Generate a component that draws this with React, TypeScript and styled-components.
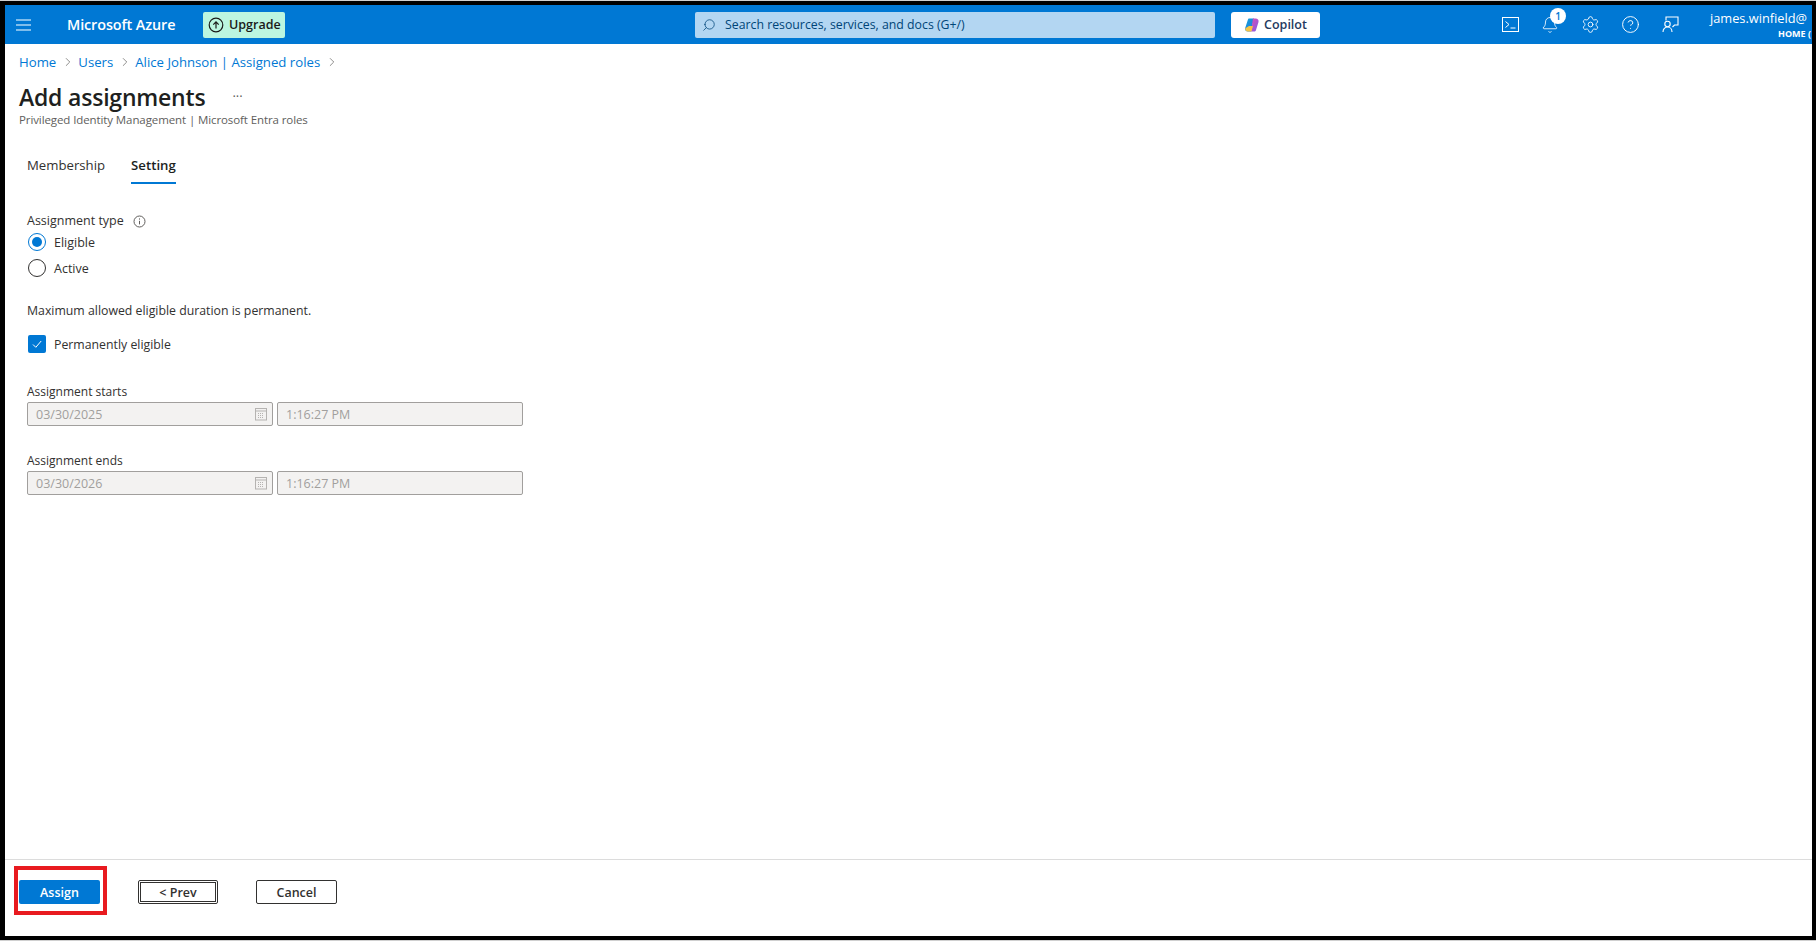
import styled, { createGlobalStyle } from "styled-components";
import { Bell, ChevronRight, CircleHelp, Search, Settings } from "lucide-react";

const GlobalStyle = createGlobalStyle`
  html, body { margin: 0; padding: 0; background: #fff; overflow: hidden; }
  * { box-sizing: border-box; }
`;

const font = `"Open Sans", "Noto Sans", "Liberation Sans", sans-serif`;

const Frame = styled.div`
  width: 1816px;
  height: 941px;
  padding: 1px 0 1px 0;
  background: #d0d0d0;
  font-family: ${font};
  color: #323130;
`;

const Page = styled.div`
  height: 939px;
  border: solid #000;
  border-width: 4px 4px 4px 5px;
  background: #fff;
  display: flex;
  flex-direction: column;
  overflow: hidden;
`;

const TopBar = styled.header`
  height: 39px;
  flex: none;
  background: #0078d4;
  display: flex;
  align-items: center;
  color: #fff;
`;

const Burger = styled.div`
  width: 62px;
  padding-left: 11px;
  display: flex;
`;

const Brand = styled.div`
  width: 136px;
  font-size: 14.4px;
  font-weight: 600;
  letter-spacing: -0.1px;
  white-space: nowrap;
`;

const Upgrade = styled.div`
  width: 82px;
  height: 26px;
  background: #bcf6e0;
  border-radius: 2px;
  display: flex;
  align-items: center;
  gap: 5px;
  padding-left: 5px;
  font-size: 12.5px;
  font-weight: 600;
  color: #1b1a19;
`;

const SearchBox = styled.div`
  width: 520px;
  height: 26px;
  margin-left: 410px;
  background: #b3d6f2;
  border-radius: 2px;
  display: flex;
  align-items: center;
  gap: 9px;
  padding-left: 7px;
  font-size: 12.3px;
  color: #004578;
`;

const Copilot = styled.div`
  width: 89px;
  height: 26px;
  margin-left: 16px;
  background: #fff;
  border-radius: 3px;
  display: flex;
  align-items: center;
  justify-content: center;
  gap: 4px;
  font-size: 12.5px;
  font-weight: 600;
  color: #243a5e;
`;

const IconRow = styled.div`
  display: flex;
  align-items: center;
  margin-left: 180px;
  gap: 20px;
`;

const TopIcon = styled.div`
  position: relative;
  width: 20px;
  height: 20px;
  display: flex;
  align-items: center;
  justify-content: center;
  color: #fff;
`;

const Badge = styled.span`
  position: absolute;
  top: -7px;
  left: 10px;
  width: 16px;
  height: 16px;
  border-radius: 50%;
  background: #fff;
  color: #0078d4;
  font-size: 10px;
  font-weight: 600;
  line-height: 16px;
  text-align: center;
`;

const Account = styled.div`
  flex: 1;
  margin-left: 30px;
  white-space: nowrap;
  padding-top: 1px;
`;

const AccountName = styled.div`
  font-size: 12.8px;
  line-height: 16px;
`;

const AccountTenant = styled.div`
  font-size: 9px;
  font-weight: 700;
  line-height: 13px;
  padding-top: 1px;
  text-align: right;
  padding-right: 1px;
`;

const Content = styled.main`
  flex: 1;
  min-height: 0;
`;

const Crumbs = styled.nav`
  display: flex;
  align-items: center;
  height: 20px;
  margin: 8px 0 0 14px;
  font-size: 13.2px;
  color: #0078d4;
`;

const Crumb = styled.span`
  display: flex;
  align-items: center;
`;

const Sep = styled.span`
  display: flex;
  margin: 0 3px 0 5px;
  color: #605e5c;
`;

const TitleRow = styled.div`
  display: flex;
  align-items: center;
  height: 36px;
  margin: 7px 0 0 14px;
`;

const Title = styled.h1`
  margin: 0;
  font-size: 23px;
  line-height: 36px;
  font-weight: 600;
  color: #201f1e;
  letter-spacing: -0.2px;
`;

const More = styled.span`
  margin: -2px 0 0 27px;
  font-size: 13px;
  line-height: 13px;
  color: #605e5c;
`;

const Subtitle = styled.div`
  margin: -3px 0 0 14px;
  font-size: 11.5px;
  line-height: 16px;
  color: #605e5c;
  letter-spacing: -0.1px;
`;

const Tabs = styled.div`
  display: flex;
  gap: 26px;
  margin: 22px 0 0 22px;
  height: 34px;
`;

const Tab = styled.div<{ $active?: boolean }>`
  height: 34px;
  padding-top: 5px;
  font-size: 13.2px;
  line-height: 20px;
  font-weight: ${({ $active }) => ($active ? 600 : 400)};
  color: ${({ $active }) => ($active ? "#201f1e" : "#323130")};
  border-bottom: 2px solid ${({ $active }) => ($active ? "#0078d4" : "transparent")};
`;

const Form = styled.div`
  margin: 29px 0 0 22px;
  width: 500px;
  font-size: 12.5px;
`;

const LabelRow = styled.div`
  display: flex;
  align-items: center;
  gap: 9px;
  height: 16px;
  line-height: 16px;
`;

const RadioRow = styled.div`
  display: flex;
  align-items: center;
  gap: 8px;
  height: 26px;
  padding-left: 1px;
`;

const RadioDot = styled.span<{ $checked?: boolean }>`
  width: 18px;
  height: 18px;
  border-radius: 50%;
  border: 1px solid ${({ $checked }) => ($checked ? "#0078d4" : "#323130")};
  display: flex;
  align-items: center;
  justify-content: center;
  &::after {
    content: "";
    width: 10px;
    height: 10px;
    border-radius: 50%;
    background: ${({ $checked }) => ($checked ? "#0078d4" : "transparent")};
  }
`;

const Note = styled.div`
  margin-top: 21px;
  height: 18px;
  line-height: 18px;
  white-space: nowrap;
  font-size: 12.3px;
`;

const CheckRow = styled.div`
  display: flex;
  align-items: center;
  gap: 8px;
  height: 18px;
  margin: 15px 0 30px;
  padding-left: 1px;
  font-size: 12.3px;
`;

const CheckBox = styled.span`
  width: 18px;
  height: 18px;
  border-radius: 2px;
  background: #0078d4;
  display: flex;
  align-items: center;
  justify-content: center;
`;

const FieldLabel = styled.div`
  margin-top: 26px;
  height: 18px;
  line-height: 18px;
  font-size: 12px;
`;

const DateGroup = styled.div`
  display: grid;
  grid-template-columns: 246px 246px;
  gap: 4px;
  margin-top: 1px;
`;

const Input = styled.div`
  height: 24px;
  background: #f3f2f1;
  border: 1px solid #a19f9d;
  border-radius: 2px;
  display: flex;
  align-items: center;
  justify-content: space-between;
  padding: 0 4px 0 8px;
  font-size: 12.5px;
  color: #a19f9d;
`;

const Footer = styled.footer`
  flex: none;
  height: 77px;
  border-top: 1px solid #dcdcdc;
  display: flex;
  align-items: flex-start;
  padding: 6px 0 0 9px;
`;

const Highlight = styled.div`
  width: 93px;
  height: 49px;
  border: 4px solid #e81a1f;
  padding: 10px 0 0 1px;
`;

const Button = styled.div<{ $variant?: "primary" | "focus" }>`
  width: ${({ $variant }) => ($variant === "focus" ? "80px" : "81px")};
  height: 24px;
  border-radius: 2px;
  display: flex;
  align-items: center;
  justify-content: center;
  font-size: 12.5px;
  font-weight: 600;
  background: ${({ $variant }) => ($variant === "primary" ? "#0078d4" : "#fff")};
  color: ${({ $variant }) => ($variant === "primary" ? "#fff" : "#323130")};
  border: ${({ $variant }) => ($variant === "primary" ? "none" : $variant === "focus" ? "3px double #323130" : "1px solid #323130")};
`;

const PrevSlot = styled.div`
  margin: 14px 0 0 31px;
`;

const CancelSlot = styled.div`
  margin: 14px 0 0 38px;
`;

const CalendarIcon = () => (
  <svg width="14" height="14" viewBox="0 0 14 14" fill="none" stroke="#b5b3b1">
    <rect x="1.5" y="1.5" width="11" height="11.5" />
    <path d="M1.5 4h11" />
    <path d="M4 6.5h6M4 8.5h6M4 10.5h6" strokeDasharray="1 1" />
  </svg>
);

const CopilotIcon = () => (
  <svg width="16" height="16" viewBox="0 0 16 16">
    <defs>
      <linearGradient id="cpA" x1="0" y1="0" x2="1" y2="1">
        <stop offset="0" stopColor="#0fa5d8" />
        <stop offset="1" stopColor="#2b6fe0" />
      </linearGradient>
      <linearGradient id="cpB" x1="0" y1="0" x2="1" y2="1">
        <stop offset="0" stopColor="#e04fb4" />
        <stop offset="1" stopColor="#7a5ce8" />
      </linearGradient>
    </defs>
    <path d="M5 1.5h5L7 14.5H4C1.8 14.5 .6 13 1.2 11L3.8 3c.2-.9.6-1.5 1.2-1.5z" fill="url(#cpA)" />
    <path d="M9 1.5h2.5c2.2 0 3.5 1.4 3 3.5L12 13c-.3 1-1 1.5-2 1.5H7L9 1.5z" fill="url(#cpB)" />
    <path d="M5 9h4L7.4 14.5H4C2 14.5.8 13 1.4 11.2z" fill="#f6c544" />
  </svg>
);

const crumbs = ["Home", "Users", "Alice Johnson | Assigned roles"];

const DateTime = ({ date }: { date: string }) => (
  <DateGroup>
    <Input>
      {date}
      <CalendarIcon />
    </Input>
    <Input>1:16:27 PM</Input>
  </DateGroup>
);

export default function App() {
  return (
    <Frame>
      <GlobalStyle />
      <Page>
        <TopBar>
          <Burger>
            <svg width="15" height="12" viewBox="0 0 15 12" stroke="#a9d3f2" strokeWidth="1.3">
              <path d="M0 1h15M0 6h15M0 11h15" />
            </svg>
          </Burger>
          <Brand>Microsoft Azure</Brand>
          <Upgrade>
            <svg width="16" height="16" viewBox="0 0 16 16" fill="none" stroke="#1b1a19" strokeWidth="1.2">
              <circle cx="8" cy="8" r="6.8" />
              <path d="M8 11.5V5M5.3 7.6 8 4.9l2.7 2.7" />
            </svg>
            Upgrade
          </Upgrade>
          <SearchBox>
            <Search size={14} strokeWidth={1.3} style={{ transform: "scaleX(-1)" }} />
            Search resources, services, and docs (G+/)
          </SearchBox>
          <Copilot>
            <CopilotIcon />
            Copilot
          </Copilot>
          <IconRow>
            <TopIcon>
              <svg width="17" height="15" viewBox="0 0 17 15" fill="none" stroke="#fff">
                <rect x=".5" y=".5" width="16" height="14" />
                <path d="M3.5 4.5 7 7.5l-3.5 3M8.5 11h5" />
              </svg>
            </TopIcon>
            <TopIcon>
              <Bell size={18} strokeWidth={1.1} />
              <Badge>1</Badge>
            </TopIcon>
            <TopIcon>
              <Settings size={19} strokeWidth={1.1} />
            </TopIcon>
            <TopIcon>
              <CircleHelp size={19} strokeWidth={1.2} />
            </TopIcon>
            <TopIcon>
              <svg width="17" height="17" viewBox="0 0 17 17" fill="none" stroke="#fff" strokeWidth="1.1">
                <path d="M4 4.5V1h12v8h-3.5l-2 2" />
                <circle cx="5.5" cy="8" r="2.7" />
                <path d="M1 16c0-3 2-5 4.5-5S10 13 10 16" />
              </svg>
            </TopIcon>
          </IconRow>
          <Account>
            <AccountName>james.winfield@</AccountName>
            <AccountTenant>HOME (</AccountTenant>
          </Account>
        </TopBar>

        <Content>
          <Crumbs>
            {crumbs.map((c) => (
              <Crumb key={c}>
                {c}
                <Sep>
                  <ChevronRight size={14} strokeWidth={1.2} />
                </Sep>
              </Crumb>
            ))}
          </Crumbs>
          <TitleRow>
            <Title>Add assignments</Title>
            <More>···</More>
          </TitleRow>
          <Subtitle>Privileged Identity Management | Microsoft Entra roles</Subtitle>
          <Tabs>
            <Tab>Membership</Tab>
            <Tab $active>Setting</Tab>
          </Tabs>
          <Form>
            <LabelRow>
              Assignment type
              <svg width="13" height="13" viewBox="0 0 13 13" fill="none" stroke="#605e5c">
                <circle cx="6.5" cy="6.5" r="5.5" />
                <path d="M6.5 5.8v3.6M6.5 3.4v1.2" />
              </svg>
            </LabelRow>
            <RadioRow>
              <RadioDot $checked />
              Eligible
            </RadioRow>
            <RadioRow>
              <RadioDot />
              Active
            </RadioRow>
            <Note>Maximum allowed eligible duration is permanent.</Note>
            <CheckRow>
              <CheckBox>
                <svg width="12" height="12" viewBox="0 0 12 12" fill="none" stroke="#fff">
                  <path d="M2 6.5 4.8 9.3 10.2 3" />
                </svg>
              </CheckBox>
              Permanently eligible
            </CheckRow>
            <FieldLabel>Assignment starts</FieldLabel>
            <DateTime date="03/30/2025" />
            <FieldLabel>Assignment ends</FieldLabel>
            <DateTime date="03/30/2026" />
          </Form>
        </Content>

        <Footer>
          <Highlight>
            <Button $variant="primary">Assign</Button>
          </Highlight>
          <PrevSlot>
            <Button $variant="focus">&lt; Prev</Button>
          </PrevSlot>
          <CancelSlot>
            <Button>Cancel</Button>
          </CancelSlot>
        </Footer>
      </Page>
    </Frame>
  );
}
